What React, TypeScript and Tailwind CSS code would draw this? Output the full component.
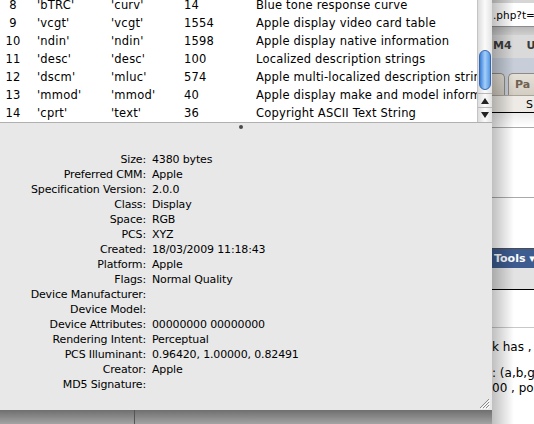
import React from "react";

type Tag = {
  n: number;
  sig: string;
  type: string;
  size: number;
  desc: string;
};

const tags: Tag[] = [
  { n: 8, sig: "'bTRC'", type: "'curv'", size: 14, desc: "Blue tone response curve" },
  { n: 9, sig: "'vcgt'", type: "'vcgt'", size: 1554, desc: "Apple display video card table" },
  { n: 10, sig: "'ndin'", type: "'ndin'", size: 1598, desc: "Apple display native information" },
  { n: 11, sig: "'desc'", type: "'desc'", size: 100, desc: "Localized description strings" },
  { n: 12, sig: "'dscm'", type: "'mluc'", size: 574, desc: "Apple multi-localized description strings" },
  { n: 13, sig: "'mmod'", type: "'mmod'", size: 40, desc: "Apple display make and model information" },
  { n: 14, sig: "'cprt'", type: "'text'", size: 36, desc: "Copyright ASCII Text String" },
];

const info: [string, string][] = [
  ["Size:", "4380 bytes"],
  ["Preferred CMM:", "Apple"],
  ["Specification Version:", "2.0.0"],
  ["Class:", "Display"],
  ["Space:", "RGB"],
  ["PCS:", "XYZ"],
  ["Created:", "18/03/2009 11:18:43"],
  ["Platform:", "Apple"],
  ["Flags:", "Normal Quality"],
  ["Device Manufacturer:", ""],
  ["Device Model:", ""],
  ["Device Attributes:", "00000000 00000000"],
  ["Rendering Intent:", "Perceptual"],
  ["PCS Illuminant:", "0.96420, 1.00000, 0.82491"],
  ["Creator:", "Apple"],
  ["MD5 Signature:", ""],
];

const Scrollbar: React.FC = () => (
  <div className="w-[15px] h-full flex flex-col bg-gradient-to-r from-[#dcdcdc] via-[#fbfbfb] to-[#e2e2e2] border-l border-[#c4c4c4]">
    <div className="flex-1 pt-[50px] pl-[1px]">
      <div className="w-[12px] h-[40px] rounded-full border border-[#3467b0] bg-gradient-to-r from-[#3a7fd8] via-[#a4cff9] to-[#5597e4]" />
    </div>
    <div className="h-[14px] border-t border-[#b8b8b8] flex items-center justify-center">
      <svg width="8" height="6" viewBox="0 0 8 6">
        <path d="M4 0 L8 6 L0 6 Z" fill="#222" />
      </svg>
    </div>
    <div className="h-[15px] border-t border-[#b8b8b8] flex items-center justify-center">
      <svg width="8" height="6" viewBox="0 0 8 6">
        <path d="M0 0 L8 0 L4 6 Z" fill="#222" />
      </svg>
    </div>
  </div>
);

const BrowserEdge: React.FC = () => (
  <div className="relative flex-1 h-full flex flex-col overflow-hidden bg-white font-['DejaVu_Sans',sans-serif] whitespace-nowrap">
    <div className="h-[3px] bg-[#d6d6d6]" />
    <div className="h-[24px] bg-white border-b border-[#8c8c8c] text-[10.5px] leading-[24px] text-black pl-[1px]">
      .php?t=
    </div>
    <div className="h-[8px] bg-gradient-to-b from-[#b9b9b9] to-[#cfcfcf]" />
    <div className="h-[23px] bg-[#dadada] flex items-center text-[11px] font-bold text-[#3a3a3a]">
      <span className="pl-[1px]">M4</span>
      <span className="pl-[15px]">U</span>
    </div>
    <div className="h-[12px] bg-[#c7ced9]" />
    <div className="h-[25px] bg-[#c7ced9] flex items-end gap-[3px]">
      <div className="w-[13px] h-[22px] bg-gradient-to-b from-[#e2ddd4] to-[#cfc9bf] rounded-tr-[5px] border-r border-t border-[#8f8a82]" />
      <div className="flex-1 h-[22px] bg-gradient-to-b from-[#e6e1d8] to-[#d3cdc2] rounded-tl-[5px] border-l border-t border-[#8f8a82] text-[11px] font-bold text-[#6f6151] pl-[6px] leading-[22px]">
        Pa
      </div>
    </div>
    <div className="h-[18px] bg-[#eeebe6] border-t border-[#a9a49b] border-b border-b-black text-[11px] leading-[17px] text-black pl-[34px]">
      S
    </div>
    <div className="h-[15px] bg-gradient-to-b from-[#ececec] to-white border-b border-[#a9a9a9]" />
    <div className="h-[70px] bg-white border-b border-[#a9a9a9]" />
    <div className="h-[51px] bg-white border-b border-[#4d4d4d]" />
    <div className="h-[19px] bg-[#3d5c8f] text-[11px] font-bold text-white leading-[19px] pl-[2px]">
      Tools ▾
    </div>
    <div className="h-[22px] bg-[#e3e3e3] border-b border-black" />
    <div className="h-[38px] bg-white border-b border-[#c8c8c8]" />
    <div className="flex-1 bg-white text-[12px] text-black leading-[15px] pt-[12px]">
      <div>k has ,</div>
      <div className="mt-[11px]">: (a,b,g</div>
      <div>00 , po</div>
    </div>
    <div className="absolute inset-y-0 left-0 w-[22px] bg-gradient-to-r from-black/25 to-transparent" />
  </div>
);

const App: React.FC = () => {
  return (
    <div className="w-[534px] h-[424px] overflow-hidden flex bg-[#9a9a9a] font-['DejaVu_Sans',sans-serif] text-black">
      <div className="w-[492px] h-full flex flex-col">
        <div className="h-[410px] flex flex-col bg-[#e8e8e8]">
          <div className="h-[123px] flex border-b border-[#b0b0b0] bg-white">
            <div className="flex-1 overflow-hidden">
              <div className="-mt-[3px] text-[11.5px] tracking-[0.2px]">
                {tags.map((t) => (
                  <div key={t.n} className="h-[18px] flex items-center whitespace-nowrap">
                    <div className="w-[26px] text-center">{t.n}</div>
                    <div className="ml-[11px] w-[74px]">{t.sig}</div>
                    <div className="w-[73px]">{t.type}</div>
                    <div className="w-[72px]">{t.size}</div>
                    <div className="flex-1 overflow-hidden">{t.desc}</div>
                  </div>
                ))}
              </div>
            </div>
            <Scrollbar />
          </div>
          <div className="flex-1 flex flex-col">
            <div className="ml-[239px] mt-[2px] w-[4px] h-[4px] rounded-full bg-[#4a4a4a]" />
            <div className="mt-[23px] grid grid-cols-[146px_1fr] gap-x-[6px] text-[11px] leading-[15px] tracking-[-0.15px]">
              {info.map(([k, v]) => (
                <React.Fragment key={k}>
                  <div className="text-right whitespace-nowrap">{k}</div>
                  <div className="whitespace-nowrap">{v}</div>
                </React.Fragment>
              ))}
            </div>
            <div className="flex-1" />
            <div className="flex justify-end pr-[2px] pb-[1px]">
              <svg width="12" height="12" viewBox="0 0 12 12">
                <path d="M11 2 L2 11 M11 5 L5 11 M11 8 L8 11" stroke="#8a8a8a" strokeWidth="1" />
                <path d="M12 3 L3 12 M12 6 L6 12 M12 9 L9 12" stroke="#ffffff" strokeWidth="1" />
              </svg>
            </div>
          </div>
        </div>
        <div className="flex-1 flex bg-gradient-to-b from-[#6f6f6f] to-[#a3a3a3]">
          <div className="w-[135px] border-r border-[#555]" />
        </div>
      </div>
      <BrowserEdge />
    </div>
  );
};

export default App;
